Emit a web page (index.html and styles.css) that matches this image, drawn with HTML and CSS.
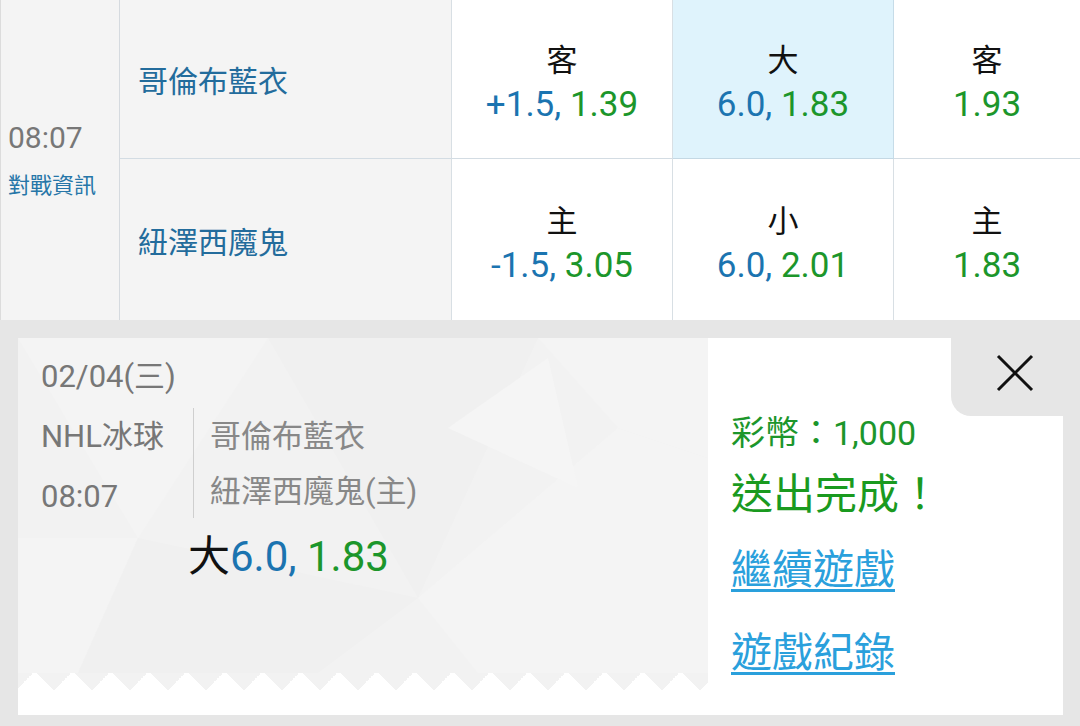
FILE: index.html
```html
<!DOCTYPE html>
<html lang="zh-Hant">
<head>
<meta charset="utf-8">
<title>NHL冰球</title>
<link rel="stylesheet" href="styles.css">
</head>
<body>
<div class="board">
  <div class="cell time-cell">
    <div class="time">08:07</div>
    <div class="info">對戰資訊</div>
  </div>
  <div class="cell team">哥倫布藍衣</div>
  <div class="cell odd"><div class="lbl">客</div><div class="val"><span class="b">+1.5,</span> <span class="g">1.39</span></div></div>
  <div class="cell odd sel"><div class="lbl">大</div><div class="val"><span class="b">6.0,</span> <span class="g">1.83</span></div></div>
  <div class="cell odd last"><div class="lbl">客</div><div class="val"><span class="g">1.93</span></div></div>
  <div class="cell team row2">紐澤西魔鬼</div>
  <div class="cell odd row2"><div class="lbl">主</div><div class="val"><span class="b">-1.5,</span> <span class="g">3.05</span></div></div>
  <div class="cell odd row2"><div class="lbl">小</div><div class="val"><span class="b">6.0,</span> <span class="g">2.01</span></div></div>
  <div class="cell odd row2 last"><div class="lbl">主</div><div class="val"><span class="g">1.83</span></div></div>
</div>

<div class="overlay">
  <div class="card">
    <div class="ticket">
      <div class="ticket-body">
        <svg class="pattern" viewBox="0 0 690 335" preserveAspectRatio="none" aria-hidden="true">
          <polygon points="0,0 250,0 120,200" fill="#f4f4f4"/>
          <polygon points="250,0 520,0 400,260" fill="#f0f0f0"/>
          <polygon points="520,0 690,0 690,120 600,90" fill="#f4f4f4"/>
          <polygon points="0,200 120,200 60,335 0,335" fill="#f4f4f4"/>
          <polygon points="400,260 600,90 690,120 690,335 460,335" fill="#f4f4f4"/>
          <polygon points="120,200 400,260 300,335 60,335" fill="#f0f0f0"/>
          <polygon points="430,90 530,20 560,150" fill="#f5f5f5"/>
        </svg>
        <div class="content">
          <div class="date">02/04(三)</div>
          <div class="match">
            <div class="meta">
              <div>NHL冰球</div>
              <div>08:07</div>
            </div>
            <div class="divider"></div>
            <div class="teams">
              <div>哥倫布藍衣</div>
              <div>紐澤西魔鬼(主)</div>
            </div>
          </div>
          <div class="pick"><span class="k">大</span><span class="b">6.0,</span> <span class="g">1.83</span></div>
        </div>
      </div>
      <div class="zigzag"></div>
    </div>
    <div class="result">
      <div class="coins">彩幣：1,000</div>
      <div class="done">送出完成！</div>
      <a class="link first" href="#">繼續遊戲</a>
      <a class="link" href="#">遊戲紀錄</a>
    </div>
    <div class="close">
      <svg width="38" height="38" viewBox="0 0 38 38" aria-hidden="true">
        <path d="M2 2 L36 36 M36 2 L2 36" stroke="#111" stroke-width="3" fill="none"/>
      </svg>
    </div>
  </div>
</div>
</body>
</html>
```
FILE: styles.css
```css
* { box-sizing: border-box; }
html, body { margin: 0; padding: 0; }
body {
  width: 1080px;
  height: 726px;
  overflow: hidden;
  background: #e6e6e6;
  font-family: Roboto, "Noto Sans CJK TC", sans-serif;
}

.b { color: #1b74b0; }
.g { color: #1c962b; }

/* top odds board */
.board {
  display: grid;
  grid-template-columns: 120px 332px 221px 221px 186px;
  grid-template-rows: 159px 161px;
  background: #fff;
}
.cell {
  border-right: 1px solid #d8dfe4;
  border-bottom: 1px solid #d3dce3;
}
.cell.row2 { border-bottom: none; }
.cell.last { border-right: none; }

.time-cell {
  grid-row: 1 / span 2;
  background: #f4f4f4;
  border-left: 1px solid #dcdcdc;
  border-bottom: none;
  border-right-color: #d5dadf;
  display: flex;
  flex-direction: column;
  justify-content: center;
  padding: 0 0 0 7px;
}
.time {
  font-size: 30px;
  line-height: 44px;
  color: #777;
}
.info {
  margin-top: 8px;
  font-size: 22px;
  line-height: 36px;
  color: #2676a8;
}

.team {
  background: #f4f4f4;
  display: flex;
  align-items: center;
  padding: 0 0 0 18px;
  font-size: 30px;
  color: #236c9c;
}

.odd {
  display: flex;
  flex-direction: column;
  align-items: center;
  justify-content: center;
  padding-top: 10px;
}
.odd .lbl {
  font-size: 31px;
  line-height: 42px;
  color: #111;
}
.odd .val {
  font-size: 35px;
  line-height: 46px;
}
.odd.sel {
  background: #dff3fc;
  border-right-color: #c6dce8;
  border-bottom-color: #c4d8e4;
}

/* result overlay */
.overlay {
  padding: 18px 17px 11px 18px;
}
.card {
  position: relative;
  display: flex;
  height: 377px;
  background: #fff;
}
.ticket {
  width: 690px;
  display: flex;
  flex-direction: column;
}
.ticket-body {
  position: relative;
  height: 335px;
  background: #f2f2f2;
}
.pattern {
  position: absolute;
  left: 0;
  top: 0;
  width: 100%;
  height: 100%;
}
.content {
  position: relative;
  padding: 17px 0 0 23px;
  color: #777;
}
.date {
  font-size: 31px;
  line-height: 44px;
}
.match {
  display: flex;
  align-items: flex-start;
  margin-top: 8px;
}
.meta {
  width: 152px;
  font-size: 31px;
  line-height: 60px;
}
.divider {
  width: 1px;
  height: 110px;
  margin-top: 1px;
  background: #cfcfcf;
}
.teams {
  padding: 2px 0 0 16px;
  font-size: 31px;
  line-height: 55px;
  color: #888;
}
.pick {
  margin: 5px 0 0 147px;
  font-size: 42px;
  line-height: 50px;
}
.pick .k { color: #111; }

.zigzag {
  height: 17px;
  background: conic-gradient(from -45deg at 50% 100%, #f2f2f2 90deg, transparent 0) 17px 0 / 38px 17px repeat-x;
}

.result {
  flex: 1;
  display: flex;
  flex-direction: column;
  align-items: flex-start;
  padding: 73px 0 0 23px;
}
.coins {
  font-size: 34px;
  line-height: 44px;
  color: #1c962b;
}
.done {
  margin-top: 12px;
  font-size: 42px;
  line-height: 56px;
  color: #1a9a1f;
}
.link {
  margin-top: 19px;
  font-size: 41px;
  line-height: 56px;
  color: #2aa0dc;
  text-decoration: underline;
  text-decoration-thickness: 3px;
  text-underline-offset: 5px;
}
.link + .link { margin-top: 27px; }

.close {
  position: absolute;
  top: 0;
  right: 0;
  width: 112px;
  height: 78px;
  background: #e6e6e6;
  border-bottom-left-radius: 20px;
  display: flex;
  align-items: center;
  justify-content: center;
  padding: 0 0 8px 16px;
}
```
